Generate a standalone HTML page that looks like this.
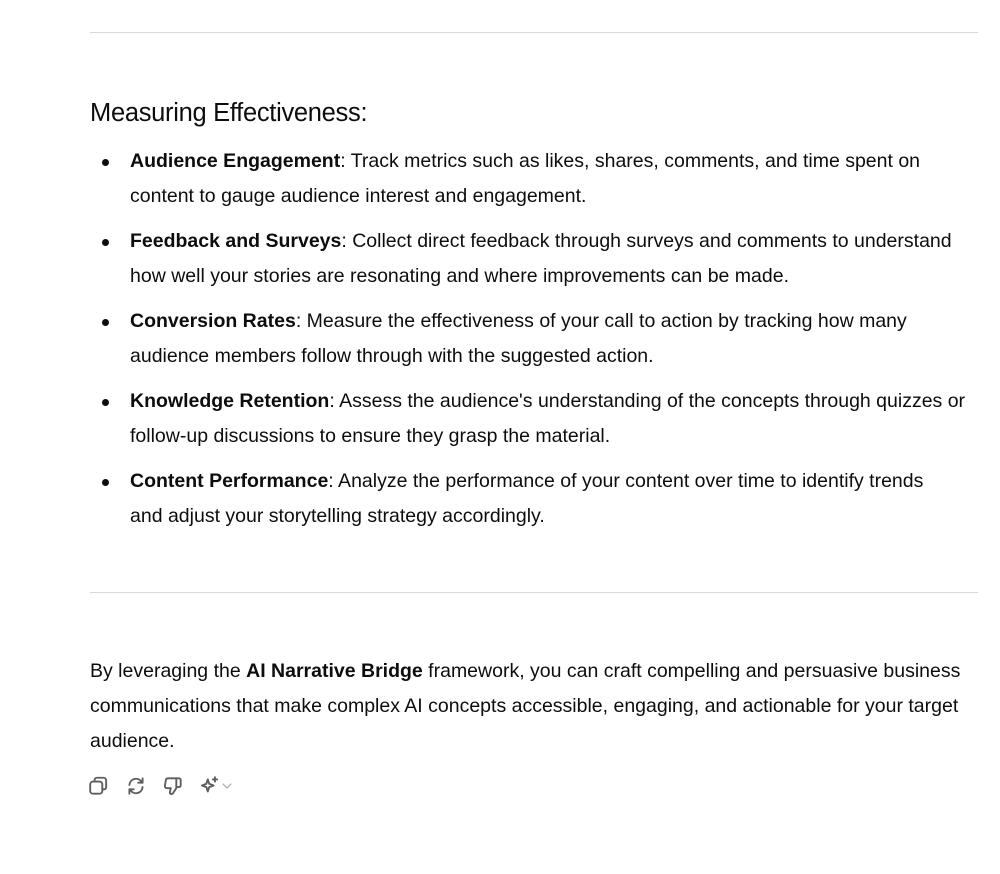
<!DOCTYPE html>
<html><head><meta charset="utf-8"><style>
*{margin:0;padding:0;box-sizing:border-box}
body{width:1000px;height:874px;background:#fff;font-family:"Liberation Sans",sans-serif;color:#0d0d0d;position:relative;overflow:hidden}
.hr{position:absolute;left:90px;width:888px;height:1px;background:#d9d9d9}
h3{position:absolute;left:90px;top:99px;font-size:25.5px;font-weight:normal;letter-spacing:-0.3px}
ul{position:absolute;left:130px;top:144px;width:900px;list-style:none}
li{font-size:19.5px;line-height:35px;margin-bottom:10px;position:relative;white-space:nowrap}
li:before{content:"";position:absolute;left:-28px;top:15px;width:7px;height:7px;border-radius:50%;background:#0d0d0d}
b{font-weight:bold}
p{position:absolute;left:90px;top:654px;width:950px;font-size:19.5px;line-height:35px;white-space:nowrap}
.icons{position:absolute;left:88px;top:775px;display:flex;gap:15px;align-items:center}
svg{stroke:#5d5d5d;fill:none;stroke-width:1.7;stroke-linecap:round;stroke-linejoin:round}
</style></head><body>
<div class="hr" style="top:32px"></div>
<h3>Measuring Effectiveness:</h3>
<ul>
<li><b>Audience Engagement</b>: Track metrics such as likes, shares, comments, and time spent on<br>content to gauge audience interest and engagement.</li>
<li><b>Feedback and Surveys</b>: Collect direct feedback through surveys and comments to understand<br>how well your stories are resonating and where improvements can be made.</li>
<li><b>Conversion Rates</b>: Measure the effectiveness of your call to action by tracking how many<br>audience members follow through with the suggested action.</li>
<li><b>Knowledge Retention</b>: Assess the audience's understanding of the concepts through quizzes or<br>follow-up discussions to ensure they grasp the material.</li>
<li><b>Content Performance</b>: Analyze the performance of your content over time to identify trends<br>and adjust your storytelling strategy accordingly.</li>
</ul>
<div class="hr" style="top:592px"></div>
<p>By leveraging the <b>AI Narrative Bridge</b> framework, you can craft compelling and persuasive business<br>communications that make complex AI concepts accessible, engaging, and actionable for your target<br>audience.</p>
<div class="icons">
<svg width="22" height="22" viewBox="0 0 20 20"><rect x="2" y="6" width="11" height="11" rx="2.5"/><path d="M6 6V4.5A2 2 0 0 1 8 2.5h6A2.5 2.5 0 0 1 16.5 5v6a2 2 0 0 1-2 2H13"/></svg>
<svg width="22" height="22" viewBox="0 0 20 20"><path d="M4 9a6 6 0 0 1 10.5-3.5L16 7M16 3v4h-4M16 11a6 6 0 0 1-10.5 3.5L4 13M4 17v-4h4"/></svg>
<svg width="22" height="22" viewBox="0 0 20 20"><path d="M13 3H5.5a2 2 0 0 0-2 1.6L2.6 10a1.8 1.8 0 0 0 1.8 2H8l-.8 3.5a1.5 1.5 0 0 0 2.8 1L13 12V3zM13 3h2.5a1.5 1.5 0 0 1 1.5 1.5v5a1.5 1.5 0 0 1-1.5 1.5H13"/></svg>
<span style="display:flex;align-items:center"><svg width="22" height="22" viewBox="0 0 20 20"><path d="M8 4l1.3 4 4 1.5-4 1.5L8 15l-1.3-4-4-1.5 4-1.5z"/><path d="M14.5 2v4M12.5 4h4"/></svg><svg width="12" height="12" viewBox="0 0 12 12" style="stroke:#aaa;stroke-width:1.2"><path d="M2 4l4 4 4-4"/></svg></span>
</div>
</body></html>
